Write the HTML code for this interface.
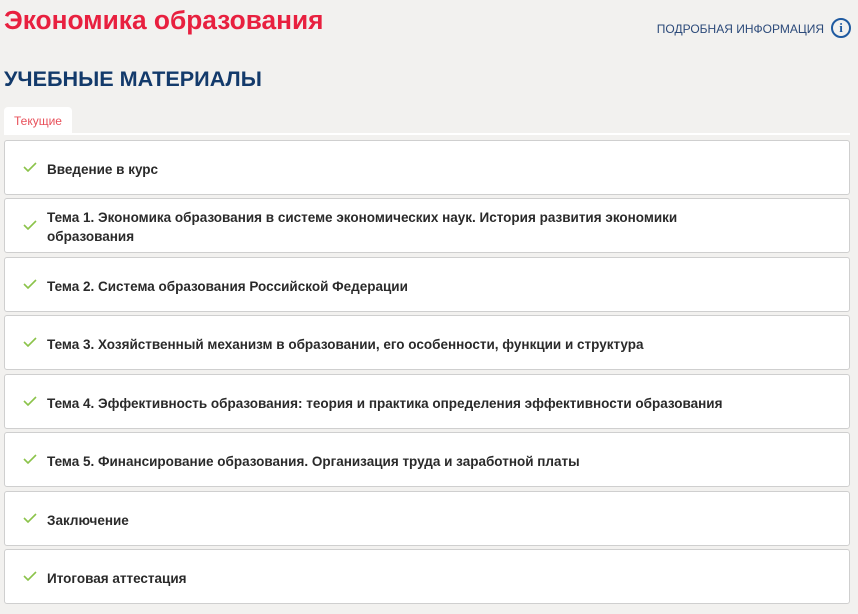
<!DOCTYPE html>
<html><head><meta charset="utf-8"><style>
body{margin:0;width:858px;height:614px;background:#f2f1ef;font-family:"Liberation Sans",sans-serif;position:relative;overflow:hidden}
.t{position:absolute;left:4px;top:5px;font-size:26.3px;font-weight:bold;color:#e8203f;white-space:nowrap}
.info{position:absolute;right:34px;top:22px;font-size:12px;color:#2c4a7a}
.ic{position:absolute;left:831px;top:18px;width:16px;height:16px;border:2px solid #1f5aa0;border-radius:50%;color:#1f5aa0;font:bold 13px "Liberation Serif",serif;text-align:center;line-height:16px}
.h{position:absolute;left:4px;top:66px;font-size:21.6px;font-weight:bold;color:#133a6b}
.tab{position:absolute;left:4px;top:107px;width:68px;height:27px;background:#fff;border-radius:4px 4px 0 0;font-size:12px;color:#e8505a;text-align:center;line-height:29px}
.line{position:absolute;left:4px;top:133px;width:846px;height:2px;background:#fff}
.c{position:absolute;left:4px;width:844px;height:53px;background:#fff;border:1px solid #cfcfcf;border-radius:3px;display:flex;align-items:center;box-sizing:content-box}
.c span{margin-left:42px;font-size:13.5px;font-weight:bold;color:#2a2a2a;line-height:19px;padding-right:120px;padding-top:3px}
.c svg{position:absolute;left:18px;top:50%;margin-top:-6px}
</style></head><body>
<div class="t">Экономика образования</div>
<div class="info">ПОДРОБНАЯ ИНФОРМАЦИЯ</div>
<div class="ic">i</div>
<div class="h">УЧЕБНЫЕ МАТЕРИАЛЫ</div>
<div class="tab">Текущие</div>
<div class="line"></div>
<div class="c" style="top:140px"><svg width="14" height="10"><path d="M1 5l4 4 8-8" stroke="#8bc34a" stroke-width="1.6" fill="none"/></svg><span>Введение в курс</span></div>
<div class="c" style="top:198px"><svg width="14" height="10"><path d="M1 5l4 4 8-8" stroke="#8bc34a" stroke-width="1.6" fill="none"/></svg><span>Тема 1. Экономика образования в системе экономических наук. История развития экономики образования</span></div>
<div class="c" style="top:257px"><svg width="14" height="10"><path d="M1 5l4 4 8-8" stroke="#8bc34a" stroke-width="1.6" fill="none"/></svg><span>Тема 2. Система образования Российской Федерации</span></div>
<div class="c" style="top:315px"><svg width="14" height="10"><path d="M1 5l4 4 8-8" stroke="#8bc34a" stroke-width="1.6" fill="none"/></svg><span>Тема 3. Хозяйственный механизм в образовании, его особенности, функции и структура</span></div>
<div class="c" style="top:374px"><svg width="14" height="10"><path d="M1 5l4 4 8-8" stroke="#8bc34a" stroke-width="1.6" fill="none"/></svg><span style="padding-right:0">Тема 4. Эффективность образования: теория и практика определения эффективности образования</span></div>
<div class="c" style="top:432px"><svg width="14" height="10"><path d="M1 5l4 4 8-8" stroke="#8bc34a" stroke-width="1.6" fill="none"/></svg><span>Тема 5. Финансирование образования. Организация труда и заработной платы</span></div>
<div class="c" style="top:491px"><svg width="14" height="10"><path d="M1 5l4 4 8-8" stroke="#8bc34a" stroke-width="1.6" fill="none"/></svg><span>Заключение</span></div>
<div class="c" style="top:549px"><svg width="14" height="10"><path d="M1 5l4 4 8-8" stroke="#8bc34a" stroke-width="1.6" fill="none"/></svg><span>Итоговая аттестация</span></div>
</body></html>
